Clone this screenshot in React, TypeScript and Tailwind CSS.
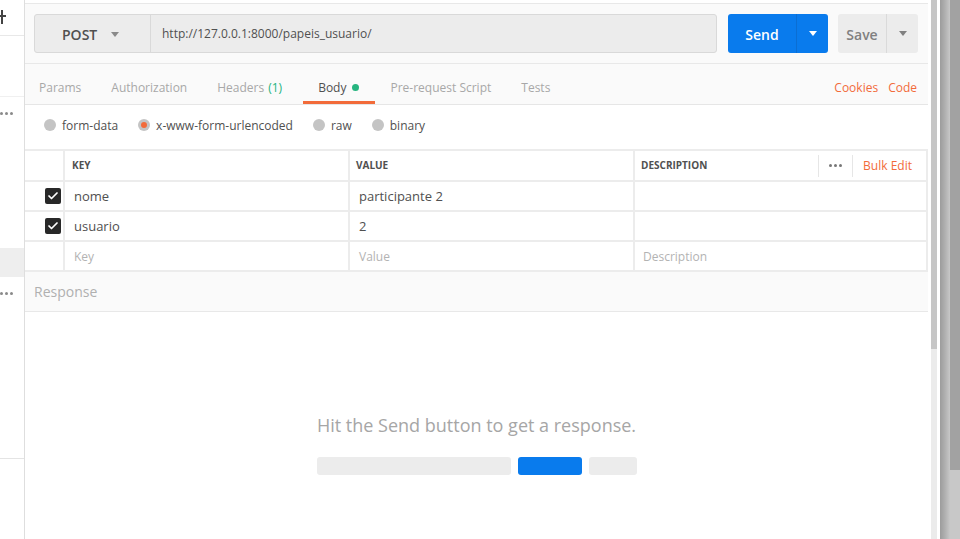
import { Check } from 'lucide-react';

const TABS = [
  { label: 'Params' },
  { label: 'Authorization' },
  { label: 'Headers', count: '(1)' },
  { label: 'Body', active: true },
  { label: 'Pre-request Script' },
  { label: 'Tests' },
];

const BODY_TYPES = [
  { label: 'form-data' },
  { label: 'x-www-form-urlencoded', selected: true },
  { label: 'raw' },
  { label: 'binary' },
];

const ROWS = [
  { key: 'nome', value: 'participante 2' },
  { key: 'usuario', value: '2' },
];

function Caret({ className }: { className: string }) {
  return (
    <svg width="8" height="5" viewBox="0 0 8 5" className={className}>
      <path d="M0 0h8L4 5z" fill="currentColor" />
    </svg>
  );
}

function Dots({ className }: { className: string }) {
  return (
    <span className={`flex gap-[2px] ${className}`}>
      <span className="h-[3px] w-[3px] rounded-full bg-current" />
      <span className="h-[3px] w-[3px] rounded-full bg-current" />
      <span className="h-[3px] w-[3px] rounded-full bg-current" />
    </span>
  );
}

function Sidebar() {
  return (
    <div className="flex w-[25px] shrink-0 flex-col border-r border-[#dedede] bg-white">
      <div className="flex h-[36px] shrink-0 items-start border-b border-[#e8e8e8] pt-[10px]">
        <svg width="6" height="14" viewBox="0 0 6 14" className="text-[#444]">
          <path d="M1 0h2v5h3v2H3v7H1V7H0V5h1z" fill="currentColor" />
        </svg>
      </div>
      <div className="h-[60px] shrink-0" />
      <div className="flex h-[34px] shrink-0 items-center border-t border-[#f0f0f0]">
        <Dots className="text-[#8a8a8a]" />
      </div>
      <div className="h-[118px] shrink-0" />
      <div className="h-[29px] shrink-0 bg-[#eeeeee]" />
      <div className="flex h-[32px] shrink-0 items-center">
        <Dots className="text-[#8a8a8a]" />
      </div>
      <div className="h-[150px] shrink-0 border-b border-[#e4e4e4]" />
    </div>
  );
}

function RequestBar() {
  return (
    <div className="flex h-[61px] shrink-0 items-start border-y border-[#e8e8e8] bg-[#fafafa] pl-[9px] pt-[10px]">
      <div className="flex h-[39px] w-[683px] rounded-[3px] border border-[#d9d9d9] bg-[#ececec]">
        <div className="flex w-[116px] shrink-0 items-center border-r border-[#d9d9d9] pl-[27px] pt-[1px]">
          <span className="text-[14px] font-semibold text-[#505050]">POST</span>
          <Caret className="ml-[14px] text-[#8a8a8a]" />
        </div>
        <div className="flex items-center pl-[11px] text-[12px] text-[#505050]">
          http://127.0.0.1:8000/papeis_usuario/
        </div>
      </div>
      <div className="ml-[11px] flex h-[39px] w-[100px] overflow-hidden rounded-[3px] bg-[#097bed] text-white">
        <div className="flex w-[69px] items-center justify-center border-r border-[#0b6ed3] pt-[1px] text-[14px] font-semibold">
          Send
        </div>
        <div className="flex flex-1 items-center justify-center">
          <Caret className="text-white" />
        </div>
      </div>
      <div className="ml-[10px] flex h-[39px] w-[80px] overflow-hidden rounded-[3px] bg-[#ececec] text-[#808080]">
        <div className="flex w-[49px] items-center justify-center border-r border-[#dadada] pt-[1px] text-[14px] font-semibold">
          Save
        </div>
        <div className="flex flex-1 items-center justify-center">
          <Caret className="text-[#808080]" />
        </div>
      </div>
    </div>
  );
}

function Tabs() {
  return (
    <div className="flex h-[41px] shrink-0 items-stretch border-b border-[#e6e6e6] bg-[#fafafa] pr-[11px] text-[12px]">
      {TABS.map((t) => (
        <div
          key={t.label}
          className={`flex items-center border-b-[3px] pl-[15px] pt-[10px] first:pl-[14px] ${
            t.count ? 'pr-[21px]' : t.active ? 'pr-[16px]' : 'pr-[15px]'
          } ${t.active ? 'border-[#f26b3a] text-[#505050]' : 'border-transparent text-[#a8a8a8]'}`}
        >
          <span>{t.label}</span>
          {t.count && <span className="ml-[4px] text-[#26b47f]">{t.count}</span>}
          {t.active && <span className="ml-[6px] h-[7px] w-[7px] rounded-full bg-[#26b47f]" />}
        </div>
      ))}
      <div className="ml-auto flex items-center gap-[10px] pt-[7px] text-[#f26b3a]">
        <span>Cookies</span>
        <span>Code</span>
      </div>
    </div>
  );
}

function BodyTypes() {
  return (
    <div className="flex h-[44px] shrink-0 items-center gap-[20px] pb-[2px] pl-[19px] text-[12px] text-[#505050]">
      {BODY_TYPES.map((b) => (
        <label key={b.label} className="flex items-center gap-[6px]">
          <span className="-mt-[3px] flex h-[12px] w-[12px] items-center justify-center rounded-full bg-[#c4c4c4]">
            {b.selected && <span className="h-[6px] w-[6px] rounded-full bg-[#f26b3a]" />}
          </span>
          <span>{b.label}</span>
        </label>
      ))}
    </div>
  );
}

function CheckBox() {
  return (
    <span className="flex h-[16px] w-[16px] items-center justify-center rounded-[2px] bg-[#282828]">
      <Check size={12} strokeWidth={3.5} className="text-white" />
    </span>
  );
}

function ParamsTable() {
  const cell = 'flex items-center bg-white';
  return (
    <div className="grid shrink-0 grid-cols-[38px_283px_283px_291px] grid-rows-[29px_28px_28px_28px] gap-[2px] border-y-2 border-r-2 border-[#ececec] bg-[#ececec] text-[13px]">
      <div className={cell} />
      <div className={`${cell} pl-[7px] text-[10px] font-bold text-[#505050]`}>KEY</div>
      <div className={`${cell} pl-[6px] text-[10px] font-bold text-[#505050]`}>VALUE</div>
      <div className={`${cell} pl-[6px] text-[10px] font-bold text-[#505050]`}>
        <span>DESCRIPTION</span>
        <div className="ml-auto flex h-[22px] items-center border-l border-[#e6e6e6] px-[10px]">
          <Dots className="text-[#777]" />
        </div>
        <div className="flex h-[22px] items-center border-l border-[#e6e6e6] pl-[10px] pr-[14px] text-[12px] font-normal text-[#f26b3a]">
          Bulk Edit
        </div>
      </div>
      {ROWS.map((r) => (
        <div key={r.key} className="contents">
          <div className={`${cell} justify-end pr-[2px]`}>
            <CheckBox />
          </div>
          <div className={`${cell} pl-[9px] pt-[1px] text-[#505050]`}>{r.key}</div>
          <div className={`${cell} pl-[9px] pt-[1px] text-[#505050]`}>{r.value}</div>
          <div className={cell} />
        </div>
      ))}
      <div className={cell} />
      <div className={`${cell} pl-[9px] pt-[1px] text-[12px] text-[#b3b3b3]`}>Key</div>
      <div className={`${cell} pl-[9px] pt-[1px] text-[12px] text-[#b3b3b3]`}>Value</div>
      <div className={`${cell} pl-[8px] pt-[1px] text-[12px] text-[#b3b3b3]`}>Description</div>
    </div>
  );
}

function Response() {
  return (
    <>
      <div className="flex h-[40px] shrink-0 items-center border-b border-[#e8e8e8] bg-[#fafafa] pl-[9px] text-[14px] text-[#b0b0b0]">
        Response
      </div>
      <div className="flex flex-1 flex-col items-center pt-[100px]">
        <div className="text-[18px] leading-[26px] text-[#a6a6a6]">
          Hit the Send button to get a response.
        </div>
        <div className="mt-[19px] flex gap-[7px]">
          <span className="h-[18px] w-[194px] rounded-[3px] bg-[#ececec]" />
          <span className="h-[18px] w-[64px] rounded-[3px] bg-[#097bed]" />
          <span className="h-[18px] w-[48px] rounded-[3px] bg-[#ececec]" />
        </div>
      </div>
    </>
  );
}

export default function App() {
  return (
    <div className="flex h-[539px] w-[960px] overflow-hidden bg-white font-['Open_Sans',sans-serif]">
      <Sidebar />
      <div className="flex w-[903px] shrink-0 flex-col">
        <div className="h-[3px] shrink-0 bg-white" />
        <RequestBar />
        <Tabs />
        <BodyTypes />
        <ParamsTable />
        <Response />
      </div>
      <div className="ml-[3px] flex w-[6px] shrink-0 flex-col bg-[#ebebeb]">
        <div className="h-[349px] bg-[#c6c6c6]" />
      </div>
      <div className="ml-[3px] w-[10px] shrink-0 bg-gradient-to-r from-[#9c9c9c] via-[#b0b0b0] to-[#c8c8c8]" />
      <div className="flex w-[10px] shrink-0 flex-col bg-[#c8c8c8]">
        <div className="h-[470px] bg-[#a2a2a2]" />
      </div>
    </div>
  );
}
